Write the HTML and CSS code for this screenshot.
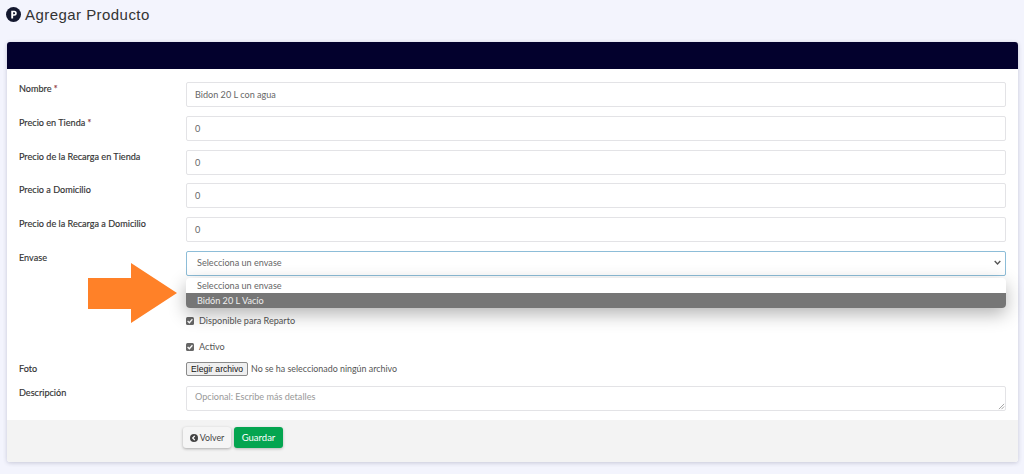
FILE: index.html
```html
<!DOCTYPE html>
<html lang="es">
<head>
<meta charset="utf-8">
<title>Agregar Producto</title>
<link rel="stylesheet" href="styles.css">
</head>
<body>
<header class="page-title">
  <svg class="logo" viewBox="0 0 16 16" width="15" height="15"><circle cx="8" cy="8" r="8" fill="#14182f"/><path d="M5.6 12.2V4h3.2a2.6 2.6 0 0 1 0 5.4H7.6v2.8z M7.600 5.700v2h1.100a1 1 0 0 0 0-2z" fill="#fff" fill-rule="evenodd"/></svg>
  <h1>Agregar Producto</h1>
</header>
<main class="card">
  <div class="card-head"></div>
  <form class="card-body">
    <div class="row"><label>Nombre <span class="req">*</span></label><div class="field">Bidon 20 L con agua</div></div>
    <div class="row"><label>Precio en Tienda <span class="req">*</span></label><div class="field">0</div></div>
    <div class="row"><label>Precio de la Recarga en Tienda</label><div class="field">0</div></div>
    <div class="row"><label>Precio a Domicilio</label><div class="field">0</div></div>
    <div class="row"><label>Precio de la Recarga a Domicilio</label><div class="field">0</div></div>
    <div class="row"><label>Envase</label>
      <div class="field select">Selecciona un envase
        <svg class="chev" viewBox="0 0 10 6" width="7" height="5"><path d="M1 1l4 4 4-4" fill="none" stroke="#555" stroke-width="2"/></svg>
      </div>
    </div>
    <div class="check-row first"><span class="box"><svg viewBox="0 0 10 10" width="8" height="8"><path d="M2 5l2.2 2.2L8 2.800" fill="none" stroke="#fff" stroke-width="1.600"/></svg></span>Disponible para Reparto</div>
    <div class="check-row last"><span class="box"><svg viewBox="0 0 10 10" width="8" height="8"><path d="M2 5l2.2 2.2L8 2.800" fill="none" stroke="#fff" stroke-width="1.600"/></svg></span>Activo</div>
    <div class="row file-row"><label>Foto</label><div class="file"><span class="file-btn">Elegir archivo</span><span>No se ha seleccionado ningún archivo</span></div></div>
    <div class="row"><label>Descripción</label><div class="field area">Opcional: Escribe más detalles
      <svg class="grip" viewBox="0 0 8 8" width="7" height="7"><path d="M1 7l6-6M4 7l3-3" stroke="#999" stroke-width="1"/></svg>
    </div></div>
  </form>
  <footer class="card-foot">
    <button type="button" class="btn back"><svg viewBox="0 0 10 10" width="8" height="8"><circle cx="5" cy="5" r="5" fill="#444"/><path d="M6 2.400L3.400 5 6 7.600" fill="none" stroke="#fff" stroke-width="1.600"/></svg>Volver</button>
    <button type="button" class="btn save">Guardar</button>
  </footer>
</main>
<div class="dropdown">
  <div class="opt">Selecciona un envase</div>
  <div class="opt active">Bidón 20 L Vacío</div>
</div>
<svg class="arrow" viewBox="0 0 92 62" width="92" height="62"><path d="M1 15H44V0L90 30 44 60V46H1z" fill="#ff8128"/></svg>
</body>
</html>
```
FILE: styles.css
```css
* { box-sizing: border-box; }
html, body { margin: 0; height: 474px; overflow: hidden; }
body {
  background: #f3f4fd;
  font-family: "Lato", "Noto Sans", sans-serif;
  font-size: 9.1px;
  color: #444;
  padding: 0 6px 0 7px;
  position: relative;
}
.page-title { display: flex; align-items: center; gap: 4px; height: 42px; padding: 0 0 13px 0; margin-left: -1px; }
.logo { flex: none; }
h1 { margin: 0; font: 400 15px "Liberation Sans", sans-serif; letter-spacing: 0.45px; color: #333; }
.card { background: #fff; border-radius: 3px; box-shadow: 0 1px 4px rgba(40,40,80,.22); height: 420px; display: flex; flex-direction: column; }
.card-head { background: #03012d; height: 27px; border-radius: 3px 3px 0 0; flex: none; }
.card-body { flex: 1; padding: 13px 12px 0 12px; display: flex; flex-direction: column; }
.row { display: grid; grid-template-columns: 167px 1fr; margin-bottom: 8.75px; }
.row label { color: #333; padding-top: 1px; -webkit-text-stroke: .15px #333; }
.req { color: #d9363e; }
.field { height: 25px; border: 1px solid #e3e3e6; border-radius: 2px; padding: 0 8px; display: flex; align-items: center; color: #666; background: #fff; position: relative; }
.select { border-color: #8dbdd8; justify-content: space-between; padding: 0 4px 2px 10px; }
.area { color: #999; padding-bottom: 3px; }
.grip { position: absolute; right: 0; bottom: 0; }
.check-row { display: flex; align-items: center; gap: 5px; margin-left: 167px; height: 12px; margin-bottom: 14px; color: #555; }
.check-row.first { margin-top: 30px; }
.check-row.last { margin-bottom: 8px; }
.box { width: 8px; height: 8px; background: #666; border-radius: 1.5px; display: flex; align-items: center; justify-content: center; flex: none; }
.file-row { margin-bottom: 10px; align-items: center; margin-top: 1px; }
.file-row label { padding: 0; }
.file { display: flex; align-items: center; gap: 3px; color: #555; font-size: 8.9px; }
.file-btn { font: 8.6px "Liberation Sans", sans-serif; color: #111; background: #efefef; border: 1px solid #8a8a8a; border-radius: 2px; padding: 0 4px; height: 14px; display: flex; align-items: center; }
.card-foot { flex: none; height: 42px; background: #f3f3f3; padding: 7px 0 0 176px; display: flex; gap: 3px; align-items: flex-start; border-radius: 0 0 3px 3px; }
.btn { font: 8.8px "Lato", sans-serif; height: 21px; border: 0; border-radius: 3px; display: flex; align-items: center; justify-content: center; gap: 2px; padding: 0; }
.back { width: 48px; background: #f5f5f5; color: #444; box-shadow: 0 1px 3px rgba(0,0,0,.3); }
.save { width: 49px; background: #04a550; color: #fff; box-shadow: 0 1px 3px rgba(0,0,0,.25); font-size: 9.5px; }
.dropdown { position: absolute; left: 186px; top: 278px; width: 820px; height: 30px; border-radius: 4px; overflow: hidden; box-shadow: 0 6px 18px rgba(0,0,0,.3); background: #fff; }
.opt { height: 15px; padding-left: 11px; display: flex; align-items: center; color: #666; }
.opt.active { background: #767676; color: #eee; }
.arrow { position: absolute; left: 87px; top: 263px; }
```
